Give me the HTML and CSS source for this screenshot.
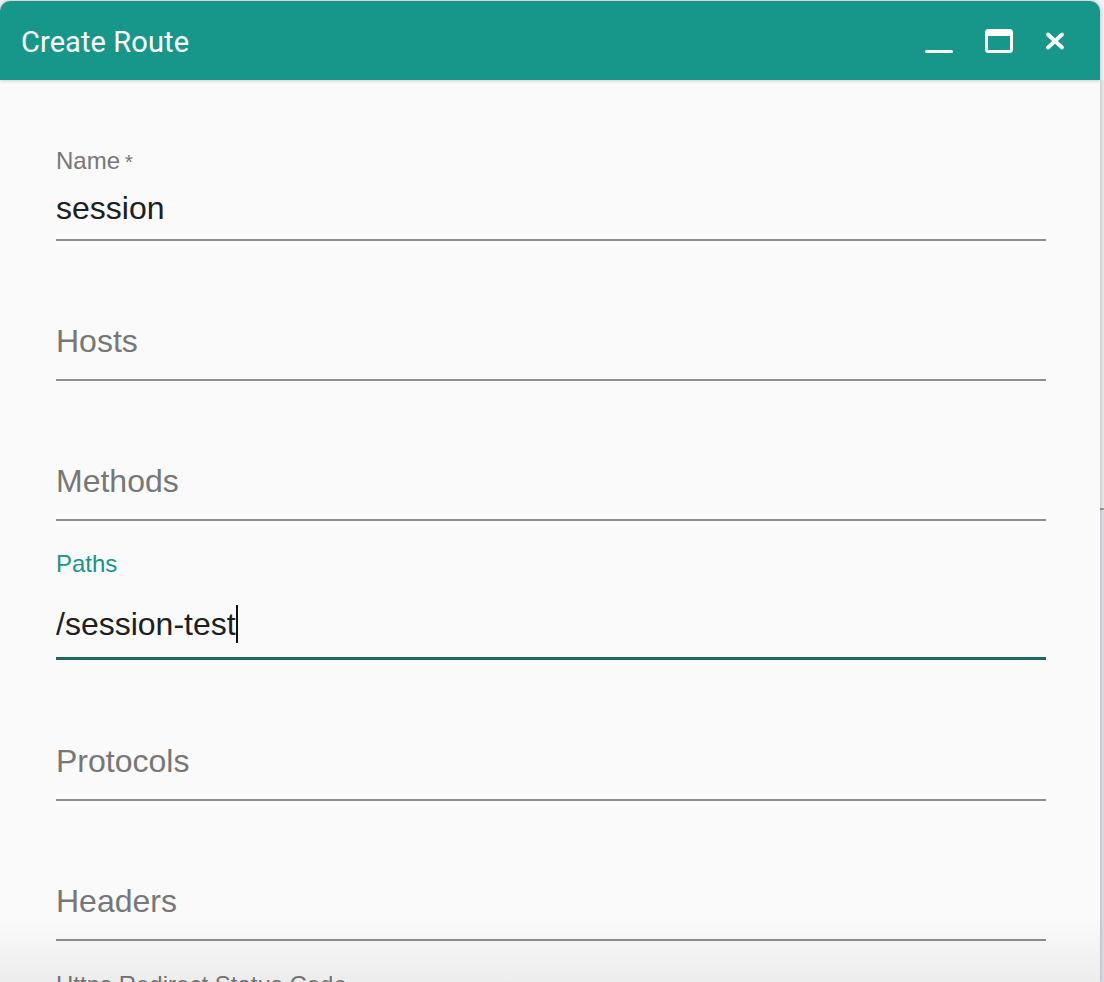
FILE: index.html
```html
<!DOCTYPE html>
<html lang="en">

<head>
    <meta charset="UTF-8" />
    <meta name="viewport" content="width=device-width, initial-scale=1.0" />
    <title>Create Route</title>
    <link rel="stylesheet" href="styles.css">
</head>

<body>

    <div class="page">
        <div class="dialog">
            <header class="dialog-header">
                <h1 class="dialog-title">Create Route</h1>
                <div class="window-actions">
                    <svg class="icon icon-min" width="28" height="24" viewBox="0 0 28 24">
                        <rect x="0" y="21" width="28" height="3" rx="1.5" fill="#fff" />
                    </svg>
                    <svg class="icon icon-max" width="28" height="24" viewBox="0 0 28 24">
                        <rect x="1.5" y="1.5" width="25" height="21" rx="2" fill="none" stroke="#fff" stroke-width="3" />
                        <rect x="1" y="1" width="26" height="6" rx="1.5" fill="#fff" />
                    </svg>
                    <svg class="icon icon-close" width="20" height="24" viewBox="0 0 20 24">
                        <path d="M3 5.5 L17 18.5 M17 5.5 L3 18.5" stroke="#fff" stroke-width="3.8" stroke-linecap="round" fill="none" />
                    </svg>
                </div>
            </header>

            <form class="route-form">
                <div class="field field-filled">
                    <label class="field-label">Name<span class="required">&thinsp;*</span></label>
                    <div class="field-value">session</div>
                </div>

                <div class="field field-empty">
                    <div class="field-placeholder">Hosts</div>
                </div>

                <div class="field field-empty">
                    <div class="field-placeholder">Methods</div>
                </div>

                <div class="field field-focused">
                    <label class="field-label">Paths</label>
                    <div class="field-value">/session-test<span class="caret"></span></div>
                </div>

                <div class="field field-empty">
                    <div class="field-placeholder">Protocols</div>
                </div>

                <div class="field field-empty">
                    <div class="field-placeholder">Headers</div>
                </div>

                <div class="field-next">
                    <label class="field-label">Https Redirect Status Code</label>
                </div>
            </form>

            <div class="bottom-fade"></div>
        </div>

        <div class="side-strip"></div>
    </div>

</body>

</html>
```

FILE: styles.css
```css
body {
    margin: 0;
    font-family: "Liberation Sans", Arial, sans-serif;
    background-color: #f1f1f2;
    overflow: hidden;
}

.page {
    display: flex;
    height: 982px;
}

.dialog {
    position: relative;
    width: 1100px;
    height: 981px;
    margin-top: 1px;
    background-color: #fafafa;
    border-radius: 10px 10px 0 0;
    box-shadow: 0 0 4px rgba(0, 0, 0, 0.25);
    overflow: hidden;
    flex-shrink: 0;
}

.dialog-header {
    height: 79px;
    background-color: #179789;
    display: flex;
    align-items: center;
    justify-content: space-between;
    padding: 0 35px 0 21px;
    box-shadow: 0 1px 3px rgba(0, 0, 0, 0.18);
    position: relative;
}

.dialog-title {
    margin: 0;
    padding-top: 2px;
    font-family: Roboto, "Liberation Sans", sans-serif;
    font-weight: 400;
    font-size: 29px;
    color: #fff;
    letter-spacing: 0.1px;
}

.window-actions {
    display: flex;
    align-items: center;
    gap: 32px;
    padding-top: 1px;
}

.icon {
    display: block;
}

.route-form {
    padding: 21px 54px 0 56px;
}

.field {
    height: 140px;
    box-sizing: border-box;
    border-bottom: 2px solid #8e8e8e;
    display: flex;
    flex-direction: column;
    justify-content: flex-end;
}

.field-label {
    display: block;
    font-size: 24px;
    line-height: 28px;
    color: #777;
}

.required {
    font-size: 20px;
    padding-left: 1px;
}

.field-value {
    font-size: 32px;
    line-height: 40px;
    color: #202020;
}

.field-filled {
    padding-bottom: 11px;
}

.field-filled .field-label {
    margin-bottom: 12px;
}

.field-placeholder {
    font-size: 32px;
    line-height: 40px;
    color: #777;
    padding-bottom: 18px;
}

.field-focused {
    height: 139px;
    margin-bottom: 1px;
    border-bottom: 3px solid #1b6a62;
    padding-bottom: 13px;
}

.field-focused .field-label {
    color: #1a9587;
    margin-bottom: 26px;
}

.caret {
    position: relative;
}

.caret::after {
    content: "";
    position: absolute;
    left: 0;
    top: -1px;
    width: 2px;
    height: 38px;
    background-color: #111;
}

.field-next {
    padding-top: 30px;
}

.bottom-fade {
    position: absolute;
    left: 0;
    right: 0;
    bottom: 0;
    height: 62px;
    background: linear-gradient(to bottom, rgba(0, 0, 0, 0), rgba(0, 0, 0, 0.055));
}

.side-strip {
    width: 4px;
    margin-top: 80px;
    background: linear-gradient(to bottom, #e9e9eb 0, #e9e9eb 428px, #9b9b9b 428px, #9b9b9b 430px, #dcdce4 430px);
}
```
